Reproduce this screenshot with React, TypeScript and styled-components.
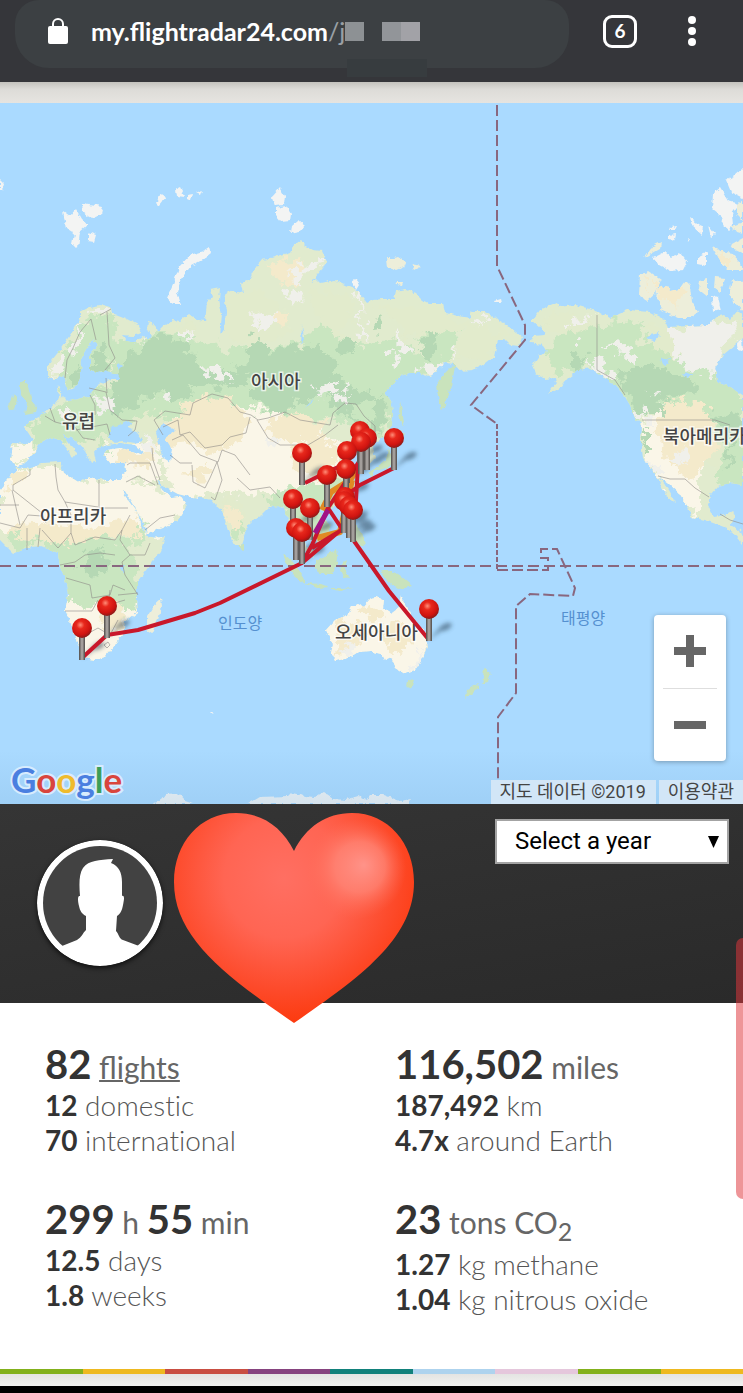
import React from "react";
import styled, { createGlobalStyle } from "styled-components";

const GlobalStyle = createGlobalStyle`
  * { box-sizing: border-box; }
  body { margin: 0; background: #fff; font-family: Lato, "Noto Sans CJK KR", sans-serif; }
`;

const Page = styled.div`
  position: relative;
  width: 100%;
  overflow: hidden;
`;

/* Browser bar */
const BrowserBar = styled.header`
  display: flex;
  align-items: flex-start;
  height: 82px;
  padding: 0 34px 0 15px;
  background: #35363a;
`;
const AddressBar = styled.div`
  position: relative;
  display: flex;
  align-items: flex-start;
  flex: 0 1 554px;
  height: 68px;
  padding: 0 32px;
  gap: 22px;
  background: #3c4043;
  border-radius: 24px 24px 34px 34px;
`;
const Address = styled.div`
  display: flex;
  align-items: center;
  height: 62px;
  color: #9aa0a6;
  font-size: 25px;
  line-height: 32px;
  white-space: nowrap;
`;
const Host = styled.strong`
  color: #fff;
  font-weight: 700;
`;
const Masked = styled.span<{ $tone: string; $gap?: number }>`
  width: 19px;
  height: 19px;
  margin-left: ${(p) => p.$gap ?? 0}px;
  background: ${(p) => p.$tone};
`;
const MaskedShade = styled.span`
  position: absolute;
  top: 59px;
  left: 332px;
  width: 80px;
  height: 18px;
  background: #373c3f;
`;
const BarActions = styled.div`
  display: flex;
  align-items: center;
  gap: 38px;
  height: 62px;
  margin-left: auto;
`;
const TabsButton = styled.button`
  width: 34px;
  height: 33px;
  padding: 0;
  border: 3px solid #fff;
  border-radius: 9px;
  background: none;
  color: #fff;
  font: 700 19px/24px Lato, sans-serif;
`;
const MenuButton = styled.button`
  display: flex;
  padding: 0;
  border: 0;
  background: none;
`;

/* Map */
const TopBand = styled.div`
  height: 21px;
  background: linear-gradient(#c4c3be, #dddcd8 35%, #e6e4e0);
`;
const MapArea = styled.section`
  position: relative;
  background: #aadaff;
`;
const MapDrawing = styled.svg`
  display: block;
  width: 100%;
  height: auto;
`;
const Region = styled.text`
  font-family: "Noto Sans CJK KR", sans-serif;
  font-size: 18px;
  font-weight: 500;
  fill: #444;
  stroke: #fff;
  stroke-opacity: 0.7;
  stroke-width: 3px;
  paint-order: stroke;
`;
const Ocean = styled.text`
  font-family: "Noto Sans CJK KR", sans-serif;
  font-size: 16px;
  fill: #5590d0;
`;
const ZoomControl = styled.div`
  position: absolute;
  right: 17px;
  bottom: 43px;
  display: flex;
  flex-direction: column;
  align-items: center;
  width: 72px;
  height: 146px;
  border-radius: 4px;
  background: #fff;
  box-shadow: 0 1px 5px rgba(0, 0, 0, 0.3);
`;
const ZoomButton = styled.button`
  display: flex;
  align-items: center;
  justify-content: center;
  flex: 1;
  width: 54px;
  padding: 0;
  border: 0;
  background: none;
  & + & { border-top: 1px solid #dedede; }
`;
const GoogleLink = styled.a`
  position: absolute;
  left: 11px;
  bottom: 3px;
  font: 700 35px/44px Lato, sans-serif;
  text-decoration: none;
  -webkit-text-stroke: 4px rgba(225, 241, 255, 0.85);
  paint-order: stroke fill;
`;
const Letter = styled.span<{ $color: string }>`
  color: ${(p) => p.$color};
`;
const Attribution = styled.div`
  position: absolute;
  right: 0;
  bottom: 0;
  display: flex;
  gap: 3px;
  color: #444;
  font: 18px/24px Roboto, "Noto Sans CJK KR", sans-serif;
`;
const Credit = styled.span`
  padding: 0 10px 0 8px;
  background: #d2e6f7;
`;
const Terms = styled.a`
  padding: 0 9px;
  background: #d2e6f7;
  color: inherit;
  text-decoration: none;
`;

/* Profile */
const Profile = styled.section`
  display: flex;
  align-items: flex-start;
  height: 199px;
  padding: 9px 14px 0 37px;
  background: linear-gradient(170deg, #353535, #2a2a2a);
`;
const Avatar = styled.svg`
  flex: none;
  margin: 27px 11px 0 0;
  border-radius: 50%;
  box-shadow: 0 2px 5px rgba(0, 0, 0, 0.7);
`;
const Heart = styled.svg`
  position: relative;
  flex: none;
`;
const YearPicker = styled.label`
  position: relative;
  margin: 6px 0 0 auto;
`;
const YearSelect = styled.select`
  appearance: none;
  width: 234px;
  height: 45px;
  padding: 0 36px 2px 18px;
  border: 2px solid #a3a3a3;
  border-radius: 0;
  background: #fff;
  color: #000;
  font: 24px Roboto, sans-serif;
`;
const Arrow = styled.svg`
  position: absolute;
  top: 17px;
  right: 10px;
  pointer-events: none;
`;

/* Totals */
const Totals = styled.main`
  display: grid;
  grid-template-columns: 350px 1fr;
  row-gap: 37px;
  padding: 37px 20px 52px 45px;
  background: #fff;
`;
const Headline = styled.h2`
  margin: 0;
  color: #333;
  font-size: 40px;
  font-weight: 700;
  line-height: 48px;
`;
const Unit = styled.span`
  color: #666;
  font-size: 30px;
  font-weight: 400;
  line-height: 30px;
  sub { line-height: 32px; }
`;
const UnitLink = styled.a`
  text-decoration-thickness: 2px;
  color: inherit;
`;
const Detail = styled.p`
  margin: 0;
  color: #555;
  font-size: 28px;
  font-weight: 300;
  font-variant-ligatures: none;
  line-height: 35px;
`;
const Value = styled.strong`
  color: #333;
  font-weight: 700;
`;

const Stripes = styled.div`
  display: flex;
  height: 5px;
`;
const Stripe = styled.span<{ $color: string }>`
  flex: 1;
  background: ${(p) => p.$color};
`;
const Footer = styled.div`
  height: 12px;
  background: linear-gradient(#e4e4e2, #f2f2f1);
`;
const SystemBar = styled.div`
  height: 7px;
  background: #000;
`;
const EdgePanel = styled.div`
  position: absolute;
  top: 938px;
  right: 0;
  width: 7px;
  height: 261px;
  border-radius: 8px 0 0 8px;
  background: rgba(223, 54, 60, 0.53);
`;

const EURASIA_AFRICA =
  "M80 312 90 307 100 305 111 308 112 313 125 318 138 325 141 333 134 336 122 335 127 341 134 343 143 336 148 339 152 336 147 328 148 322 152 323 156 328 157 333 165 325 172 320 180 321 190 314 198 320 205 321 207 302 212 297 210 290 220 288 219 300 222 315 220 335 224 330 226 312 225 300 228 290 235 292 243 293 241 283 250 280 256 267 262 260 275 257 290 252 294 244 300 240 305 245 313 250 322 251 327 262 318 273 310 284 316 279 320 283 335 280 345 285 357 290 367 303 373 300 383 299 394 299 396 291 405 289 415 293 422 300 430 304 443 304 445 313 458 316 470 318 472 311 485 311 495 317 500 322 510 327 522 337 519 346 510 345 504 339 498 340 496 347 494 357 485 364 472 370 460 371 455 364 445 363 435 372 428 377 420 373 410 373 400 376 392 385 385 393 391 401 393 412 392 425 386 435 378 441 372 447 375 458 370 464 362 456 358 450 350 455 345 456 350 463 347 468 352 475 356 485 350 497 340 505 325 509 318 508 322 518 330 525 328 535 318 543 312 535 306 529 303 535 306 545 314 552 314 558 303 548 298 535 296 522 290 524 284 508 278 506 270 507 262 515 252 520 246 530 241 545 235 545 228 530 222 510 216 505 212 500 203 498 190 497 178 494 165 487 157 480 162 490 172 497 180 496 187 506 178 520 163 528 147 533 143 522 135 508 124 490 121 490 130 503 137 512 143 528 149 537 165 536 160 552 150 565 137 582 137 600 138 612 125 622 122 635 115 645 105 657 95 660 83 658 78 645 70 620 65 610 68 595 65 578 60 567 58 553 50 550 40 546 25 548 13 553 0 540 0 490 12 475 18 467 28 469 42 463 60 462 64 473 80 483 88 477 105 480 120 480 126 470 125 462 110 464 103 455 107 450 120 448 135 452 145 454 135 445 120 443 108 445 98 448 94 453 96 462 91 463 85 450 72 438 62 434 68 442 78 452 72 459 68 450 60 440 50 437 40 443 35 452 25 463 17 466 10 460 12 443 30 444 33 440 25 428 27 423 38 418 50 408 57 402 60 395 56 390 58 385 61 392 63 398 70 401 90 396 97 385 105 382 115 377 97 373 90 370 90 355 98 345 92 340 85 351 82 360 80 378 75 388 68 390 64 375 55 380 48 378 48 365 60 350 70 335 80 318Z";
const NORTH_AMERICA =
  "M532 320 540 310 557 302 560 307 575 305 600 312 610 318 628 310 650 312 665 320 668 327 690 326 708 325 718 316 724 315 730 320 738 310 743 318V338L735 345 723 355 716 366 718 382 730 387 743 396V485L730 483 718 486 710 495 708 505 714 517 725 515 733 510 735 517 730 525 740 530 743 537V545L733 533 724 527 705 520 692 517 688 508 678 492 668 483 658 476 669 490 676 503 668 498 661 485 657 477 650 467 643 458 641 440 642 425 635 418 630 405 624 395 615 385 605 378 590 368 578 370 568 378 560 388 547 394 556 383 555 378 545 379 536 374 533 365 540 355 548 352 543 345 530 343 533 336 545 335 541 328Z";
const ARCTIC_ISLANDS =
  "M63 211 70 216 76 209 82 220 88 225 80 232 78 249 72 243 74 233 66 228ZM82 203 103 206 101 215 92 219 83 212ZM88 232 96 235 94 242 88 241Z" +
  "M156 203 160 195 166 197 159 206ZM176 189 180 187 185 197 177 196ZM187 195 193 194 191 201 187 199ZM196 193 202 190 200 195ZM0 180 4 184 2 191 0 191Z" +
  "M167 298 173 285 179 267 190 255 203 251 209 247 211 253 202 260 191 266 181 279 177 292 181 304 174 304Z" +
  "M272 197 280 188 285 196 284 205 275 206ZM276 208 286 206 291 214 290 221 281 222 276 216ZM291 226 298 220 305 226 300 232 290 234ZM351 282 355 279 359 284 356 289Z" +
  "M494 301 501 299 502 303 495 303Z" +
  "M690 218 703 227 702 235 692 226ZM708 225 715 234 711 237ZM697 257 707 252 707 266 697 264ZM687 237 690 239 688 242ZM670 227 677 226 675 230 669 230ZM669 235 676 234 674 242 669 239Z" +
  "M653 258 665 252 672 258 680 253 687 262 683 270 670 271 659 265ZM712 296 718 298 721 310 713 312Z" +
  "M713 193 720 188 728 201 739 204 732 214 733 225 729 231 722 225 723 218 712 209ZM726 180 734 176 743 168V198L731 192ZM737 344 742 339 743 352 738 350Z" +
  "M152 804 162 800 167 794 178 793 185 801 194 804ZM248 804 260 797 288 796 291 793 305 796 315 797 324 792 334 799 346 800 358 796 366 800 370 795 384 795 400 801 411 799 408 804ZM70 712 73 711ZM211 711 214 711 213 713Z";
const PALE_ISLANDS =
  "M387 258 394 258 399 257 406 262 404 267 397 270 388 267ZM411 264 421 266 414 270ZM395 282 403 282 402 285 396 284Z" +
  "M653 246 661 242 660 249 644 258ZM640 274 649 272 661 280 655 294 647 301 639 296ZM657 289 666 285 671 291 680 289 686 281 690 285 692 302 698 312 690 318 678 318 660 310 661 303 656 300Z" +
  "M712 247 721 251 732 253 740 262 743 270 727 270 720 260ZM699 281 708 279 708 297 698 289ZM715 277 726 278 720 292 714 287ZM732 280 743 282V312L734 302 729 294Z" +
  "M737 204 743 202V221L737 215ZM732 226 743 222V234L736 232ZM730 245 743 238V253L732 248Z" +
  "M326 630 335 620 348 615 352 607 358 604 363 607 371 598 377 597 384 600 383 608 391 613 399 607 401 596 407 608 414 620 426 633 428 647 421 661 415 670 404 673 396 668 391 657 385 660 382 654 370 651 358 652 349 658 335 661 331 653 333 645ZM147 616 153 606 161 599 162 606 158 620 152 633 147 630Z";
const GREEN_ISLANDS =
  "M20 383 25 380 28 388 33 402 37 408 36 413 25 415 27 403 21 394ZM8 407 14 394 18 400 15 409 9 411Z" +
  "M438 396 436 385 443 375 450 368 456 362 453 377 448 398 442 411Z" +
  "M400 401 404 421 402 427 399 415ZM397 430 406 433 399 440 395 435ZM388 447 394 458 391 466 383 469 373 472 373 477 368 472 378 466 386 461Z" +
  "M352 493 356 496 353 504ZM318 511 322 512 320 516ZM349 508 355 510 354 522 362 533 365 545 357 544 353 535 349 520ZM283 553 294 563 302 576 307 585 296 578 286 563ZM306 583 321 584 329 587 317 588ZM316 561 327 554 336 550 338 560 333 574 320 574 316 567Z" +
  "M342 563 347 560 345 571 349 578 343 577 340 570ZM381 571 392 571 402 577 413 586 405 588 398 589 388 582ZM328 588 343 588 353 587 340 591ZM408 680 414 681 411 689 407 686Z" +
  "M484 668 491 674 489 680 482 684 483 677ZM477 683 480 686 472 694 465 699 468 690ZM238 545 244 544 244 550Z";

const INLAND_WATER =
  "M108 437 112 427 122 424 128 421 131 424 128 427 136 431 143 441 134 443 122 441 114 442ZM156 433 163 423 175 430 165 438 172 449 170 462 162 457 160 446ZM97 373 104 371 118 375 120 379 104 379ZM650 335 660 333 655 341 647 338ZM660 359 670 358 665 367ZM683 374 695 373 686 378ZM302 325 301 345 304 339ZM314 397 304 408 309 405ZM119 566 124 565 123 573ZM118 363 122 366 118 370Z";

const PALE_LAND = [
  "M0 468H65L95 480H125L190 498 160 540 110 530 0 530Z",
  "M160 430 180 410 240 395 300 420 345 445 330 480 300 490 170 500Z",
  "M60 600H140V665H60ZM326 590H430V675H326Z",
  "M640 425 670 395 700 405 715 440 700 480 700 520 650 470Z",
  "M10 445H35L30 465H10ZM105 445H160V480H105Z",
];
const SAND = [
  "M158 440 165 424 200 398 225 397 250 417 240 440 215 455 185 443 160 447Z",
  "M265 425 290 410 330 424 315 440 270 440ZM292 450 315 438 340 445 330 475 300 475Z",
  "M0 531 20 522 90 528 140 518 137 535 60 543ZM15 470 31 474 5 490ZM120 450 155 450 150 465 115 466ZM185 470 215 470 200 485Z",
  "M336 625 350 620 370 635 355 650 338 655ZM360 607 375 605 388 620 370 618ZM380 628 400 620 412 640 395 655Z",
  "M665 400 700 402 713 415 715 450 690 480 665 455 655 430ZM267 264 305 258 302 285 280 280ZM105 607 125 605 118 635 100 628Z",
  "M655 285 682 285 675 310ZM645 275 652 276 647 292ZM168 287 178 280 176 302ZM718 250 736 260 722 265ZM273 315 285 310 287 320 277 327ZM225 505 238 510 240 530 230 525Z",
];
const LIGHT_GREEN = [
  "M75 335 85 322 112 316 120 345 105 380 60 395Z",
  "M60 350 85 330 82 380 60 380ZM30 425 55 405 105 385 140 400 130 427 95 440 35 445Z",
  "M110 345 150 335 175 325 225 350 300 345 330 315 345 345 405 340 435 370 390 400 385 450 340 420 250 410 220 400 160 420 120 410Z",
  "M418 335 450 315 460 345 425 370ZM350 470 340 505 285 515 265 500 290 485 330 480Z",
  "M40 548 55 530 130 542 140 580 138 610 115 612 65 600ZM0 530 40 540 20 555ZM120 530 150 520 140 545Z",
  "M545 345 580 325 645 322 640 345 690 360 743 385 743 420 700 418 650 400 640 420 620 400 590 365 550 375Z",
  "M712 435 743 410 743 485 715 487 720 460ZM290 510 330 515 325 545 305 535ZM387 400 405 395 403 435 393 435ZM232 510 245 525 240 545 230 535ZM436 375 452 372 442 405Z",
  "M30 410 37 412 25 415ZM10 397 17 404 8 410ZM96 445 106 440 112 455 98 455Z",
];
const DARK_GREEN = [
  "M107 405 115 375 135 352 165 335 190 342 192 362 210 378 187 390 183 408 170 390 148 395 130 410 116 415Z",
  "M255 335 268 350 320 345 340 370 325 378 290 380 260 375 225 390 200 382 215 372 245 365Z",
  "M255 375 335 365 350 390 385 393 350 410 385 440 340 415 325 398 300 400 280 415 255 405Z",
  "M90 352 108 345 107 375 90 370ZM67 374 80 365 80 385 68 388ZM375 400 388 405 382 435 368 425Z",
  "M620 375 645 365 680 375 700 390 680 398 660 400 665 418 640 410 625 395ZM570 357 588 353 583 365 570 370Z",
  "M85 555 107 550 105 575 80 570ZM710 412 743 418 743 432 720 430ZM641 435 648 425 648 460ZM725 450 735 440 730 470ZM376 320 386 322 382 330 374 331ZM420 345 436 330 438 350 425 360ZM345 335 357 340 350 355 340 345Z",
];
const SNOW = [
  "M72 342 86 322 83 340 74 355ZM50 368 62 358 66 365 55 378ZM85 312 103 306 111 309 95 316Z",
  "M200 365 220 368 235 380 215 382ZM165 390 175 393 168 403 155 397ZM355 288 362 302 363 325 368 342 360 335 359 310Z",
  "M390 333 405 340 410 350 395 345ZM285 275 318 260 323 265 300 280ZM250 315 268 320 280 310 275 325 258 327ZM285 290 305 298 290 308ZM313 390 338 380 333 394 318 400Z",
  "M600 346 625 342 639 364 630 365 620 352ZM585 362 600 360 620 380 610 380ZM668 328 715 320 737 326 720 357 712 378 690 370 680 362 672 345ZM570 322 592 315 585 325 570 325Z",
  "M470 320 490 318 485 328ZM455 345 460 348 450 360ZM418 368 445 360 428 378ZM340 395 350 380 353 390ZM387 349 400 354 395 368ZM330 397 350 395 345 405Z",
  "M670 458 687 445 690 455 682 468ZM645 458 655 465 660 475 651 470ZM142 440 160 448 160 455 145 450ZM262 435 280 440 270 445ZM140 335 152 336 145 345ZM178 332 195 328 190 340ZM95 400 112 398 118 405 108 413 96 408ZM55 408 68 408 75 418 60 422Z",
  "M635 408 645 410 655 422 640 416ZM648 390 658 393 653 397ZM577 336 583 338 582 344 577 343ZM415 655 425 648 420 665 408 673ZM342 645 355 643 357 652 345 653Z",
];
const GRASS = [
  "M225 300 250 290 280 305 295 330 250 345 225 335ZM310 290 345 292 355 320 335 340 315 315ZM375 305 440 305 465 330 410 335ZM460 320 510 335 490 355 460 360Z",
  "M535 325 560 310 600 325 565 335ZM645 322 670 330 675 355 650 350ZM140 415 160 410 165 425 145 435ZM222 490 240 500 245 525 225 515Z",
  "M125 330 140 333 118 340ZM160 328 190 318 195 330 170 335ZM535 363 552 358 556 380 540 375ZM710 420 725 445 715 475 705 450Z",
];

const BORDERS =
  "M91 319 80 332 73 348 67 360 65 378M91 319 96 340M107 312 109 345 115 358 105 370M100 315 111 309M106 378 107 393M89 388 106 392 110 410 122 420 137 421 135 430 128 436M45 416 55 422 50 408M55 422 75 427 83 438 95 440M76 430 107 424 110 435M90 395 95 405 95 415M154 420 165 411 190 415 193 403 212 394 228 398 240 412 251 415 258 420 268 418 285 412 300 420 330 425 333 413 345 403 356 404 364 416 375 426 375 440M257 420 268 438 280 445 308 445 325 435 338 425M154 420 163 435M163 427 178 420 180 435 190 432 205 448 222 445 230 437 246 433 250 417M172 440 183 435 200 455 218 462 222 450 235 455 250 475M152 448 153 460 160 480M192 465 193 482 205 488 210 478 217 462M192 463 180 463 170 455M217 462 222 480 215 500 211 497M237 478 250 490 270 487 280 498M127 465 130 463 150 463 158 485M126 482 138 476 155 485M145 530 160 518 175 515M30 469 30 475 13 485 13 490 42 513 46 523M12 490 20 525M19 505 0 505M55 464 56 477 58 490 65 502 98 507M99 480 99 508 128 508M65 502 71 515 71 533M0 523 20 528 28 515 42 516M27 528 27 550M40 528 38 547M71 533 58 548 42 530M71 533 75 545 95 537 115 540 122 530M130 515 122 530 120 540 130 555 145 555 150 543M130 555 122 562 125 575 138 595M60 565 75 562 85 555 100 553 115 555M66 578 90 585 92 598 110 595 113 585 125 590M65 611 92 611 98 600M110 590 108 605 125 600M138 593 118 595M85 635 98 628 110 635 118 620M597 315V370L615 380 625 395M642 420H715L730 425M658 476 670 479 685 479 695 488 709 497M104 645 108 642 110 645 107 648ZM720 514 730 520 743 524";

const PINS: Array<[number, number]> = [
  [82, 628], [107, 606], [302, 453], [394, 438], [360, 431], [367, 438], [361, 442],
  [347, 451], [346, 469], [327, 475], [293, 499], [310, 508], [345, 497], [344, 501],
  [349, 506], [353, 510], [296, 528], [302, 532], [429, 609],
];

function Pin({ x, y }: { x: number; y: number }) {
  return (
    <g>
      <rect x={x - 3} y={y + 8} width="6" height="24" fill="url(#stem)" />
      <circle cx={x} cy={y} r="10" fill="url(#ball)" />
    </g>
  );
}

function Patches({ shapes, fill }: { shapes: string[]; fill: string }) {
  return <path d={shapes.join("")} fill={fill} filter="url(#ragged)" />;
}

function WorldMap() {
  return (
    <MapDrawing viewBox="0 103 743 701" role="img" aria-label="Flight map">
      <defs>
        <clipPath id="land">
          <path d={EURASIA_AFRICA + NORTH_AMERICA + PALE_ISLANDS} />
        </clipPath>
        <radialGradient id="ball" cx="0.42" cy="0.35" r="0.65">
          <stop offset="0" stopColor="#ff8d78" />
          <stop offset="0.3" stopColor="#e8281c" />
          <stop offset="0.75" stopColor="#d01410" />
          <stop offset="1" stopColor="#8c1a18" />
        </radialGradient>
        <linearGradient id="stem">
          <stop offset="0" stopColor="#4e4a48" />
          <stop offset="0.5" stopColor="#b4afac" />
          <stop offset="1" stopColor="#4e4a48" />
        </linearGradient>
        <linearGradient id="seaShade" x2="0" y2="1">
          <stop offset="0" stopColor="#7fb2dc" stopOpacity="0" />
          <stop offset="1" stopColor="#7fb2dc" stopOpacity="0.25" />
        </linearGradient>
        <filter id="soft" x="-50%" y="-50%" width="200%" height="200%">
          <feGaussianBlur stdDeviation="2" />
        </filter>
        <filter id="ragged" filterUnits="userSpaceOnUse" x="0" y="103" width="743" height="701">
          <feTurbulence type="fractalNoise" baseFrequency="0.09" numOctaves="3" seed="4" />
          <feDisplacementMap in="SourceGraphic" scale="24" xChannelSelector="R" yChannelSelector="G" />
        </filter>
        <filter id="coast" filterUnits="userSpaceOnUse" x="0" y="103" width="743" height="701">
          <feTurbulence type="fractalNoise" baseFrequency="0.2" numOctaves="2" seed="9" />
          <feDisplacementMap in="SourceGraphic" scale="5" xChannelSelector="R" yChannelSelector="G" />
        </filter>
      </defs>
      <rect y="103" width="743" height="701" fill="#aadaff" />
      <g filter="url(#coast)">
        <path d={ARCTIC_ISLANDS} fill="#f3f4f3" />
        <path d={GREEN_ISLANDS} fill="#c9e3bc" />
        <path d={PALE_ISLANDS} fill="#edeeda" />
        <path d={EURASIA_AFRICA + NORTH_AMERICA} fill="#e1ebce" />
        <g clipPath="url(#land)">
          <Patches shapes={PALE_LAND} fill="#faf6e8" />
          <Patches shapes={LIGHT_GREEN} fill="#c9e6c0" />
          <Patches shapes={GRASS} fill="#e2ebcc" />
          <Patches shapes={DARK_GREEN} fill="#b5d8b4" />
          <Patches shapes={SAND} fill="#f4eacb" />
          <Patches shapes={SNOW} fill="#f0f0eb" />
        </g>
        <path d={INLAND_WATER} fill="#aadaff" />
      </g>
      <path d={BORDERS} fill="none" stroke="#8d8a86" strokeOpacity="0.75" strokeWidth="0.8" strokeLinejoin="round" />
      <rect y="750" width="743" height="54" fill="url(#seaShade)" />
      <g fill="none" stroke="#89677f" strokeWidth="2">
        <path d="M0 566H743" strokeDasharray="11 5" />
        <path d="M497 105V266L525 325V340L471 405 497 424" strokeDasharray="11 4" />
        <path d="M497 424V570" strokeDasharray="5 2" />
        <path d="M497 570H548V558H541V549H557L575 588 573 596 530 594 516 606V693L498 717V780" strokeDasharray="11 4" />
      </g>
      <Region x="62" y="428">유럽</Region>
      <Region x="251" y="388">아시아</Region>
      <Region x="40" y="523">아프리카</Region>
      <Region x="663" y="443">북아메리카</Region>
      <Region x="335" y="639">오세아니아</Region>
      <Ocean x="218" y="629">인도양</Ocean>
      <Ocean x="561" y="624">태평양</Ocean>
      <g fill="#24384a" opacity="0.5" filter="url(#soft)">
        {PINS.map(([x, y]) => (
          <path key={`${x}-${y}`} d={`M${x} ${y + 31}L${x + 12} ${y + 17}Q${x + 21} ${y + 11} ${x + 23} ${y + 16}Q${x + 20} ${y + 22} ${x + 12} ${y + 22}Z`} />
        ))}
      </g>
      <g fill="none" strokeWidth="4" strokeLinejoin="round" stroke="#c9182b">
        <path d="M358 468 350 480 331 492 322 510M317 538 340 532 352 480" stroke="#e08a24" strokeWidth="6" />
        <path d="M82 658 107 635 138 630 195 613 220 603 302 563" />
        <path d="M302 563 342 529 328 508 312 545 302 563 294 525M312 548 345 528M328 508 350 475 360 460M354 541 389 591 429 640M305 483 327 472 347 463M394 468 360 485 340 500M358 465 356 500 352 530" />
        <path d="M328 510 315 533" stroke="#a11386" strokeWidth="5" />
      </g>
      {PINS.map(([x, y]) => (
        <Pin key={`${x}-${y}`} x={x} y={y} />
      ))}
    </MapDrawing>
  );
}

const GOOGLE: Array<[string, string]> = [
  ["G", "#4a7fe0"], ["o", "#d9453d"], ["o", "#efbb2c"], ["g", "#4a7fe0"], ["l", "#3c9e58"], ["e", "#d9453d"],
];
const STRIPE_COLORS = ["#83b11b", "#eeb920", "#c94e42", "#86437f", "#12817b", "#aed3ee", "#e5c7dc", "#83b11b", "#eeb920"];

export default function App() {
  return (
    <Page>
      <GlobalStyle />
      <BrowserBar>
        <AddressBar>
          <svg width="22" height="62" viewBox="0 0 22 62" aria-hidden="true">
            <rect x="1" y="26" width="20" height="18" rx="2" fill="#fff" />
            <path d="M6 27v-3a5 5 0 0 1 10 0v3" fill="none" stroke="#fff" strokeWidth="2" />
          </svg>
          <Address>
            <Host>my.flightradar24.com</Host>/j
            <Masked $tone="#8d9194" />
            <Masked $tone="#929599" $gap={18} />
            <Masked $tone="#a2a2a7" />
          </Address>
          <MaskedShade />
        </AddressBar>
        <BarActions>
          <TabsButton aria-label="Open tabs">6</TabsButton>
          <MenuButton aria-label="Menu">
            <svg width="34" height="30" viewBox="0 0 34 30" fill="#fff">
              <circle cx="17" cy="4" r="4" />
              <circle cx="17" cy="15" r="4" />
              <circle cx="17" cy="26" r="4" />
            </svg>
          </MenuButton>
        </BarActions>
      </BrowserBar>
      <TopBand />
      <MapArea>
        <WorldMap />
        <ZoomControl>
          <ZoomButton aria-label="Zoom in">
            <svg width="34" height="34" viewBox="0 0 34 34" fill="#666">
              <path d="M1 13h12V1h8v12h12v8H21v12h-8V21H1z" />
            </svg>
          </ZoomButton>
          <ZoomButton aria-label="Zoom out">
            <svg width="34" height="34" viewBox="0 0 34 34" fill="#666">
              <path d="M1 13h32v8H1z" />
            </svg>
          </ZoomButton>
        </ZoomControl>
        <GoogleLink href="#">
          {GOOGLE.map(([letter, color], i) => (
            <Letter key={i} $color={color}>{letter}</Letter>
          ))}
        </GoogleLink>
        <Attribution>
          <Credit>지도 데이터 ©2019</Credit>
          <Terms href="#">이용약관</Terms>
        </Attribution>
      </MapArea>
      <Profile>
        <Avatar width="126" height="126" viewBox="37 840 126 126" aria-hidden="true">
          <defs>
            <clipPath id="portrait"><circle cx="100" cy="903" r="60" /></clipPath>
          </defs>
          <circle cx="100" cy="903" r="63" fill="#fff" />
          <circle cx="100" cy="903" r="57" fill="#424242" />
          <path
            clipPath="url(#portrait)"
            fill="#fff"
            d="M80 896C79 884 79 874 83 868C89 860 99 860 113 859L111 863C119 866 122 873 122 882L122 896C125 895 124 900 123 905C122 911 120 914 117 916L116 931C119 934 119 939 123 940L139 946 150 970H50L62 946 77 940C82 937 82 934 86 930L86 916C82 914 80 911 79 906C78 902 77 895 80 896Z"
          />
        </Avatar>
        <Heart width="240" height="210" viewBox="0 0 240 210" role="img" aria-label="Heart">
          <defs>
            <radialGradient id="heartFill" gradientUnits="userSpaceOnUse" cx="110" cy="65" r="150">
              <stop offset="0" stopColor="#ff6f62" />
              <stop offset="0.4" stopColor="#ff6553" />
              <stop offset="0.75" stopColor="#fd4a2a" />
              <stop offset="1" stopColor="#fc380b" />
            </radialGradient>
            <radialGradient id="shine" gradientUnits="userSpaceOnUse" cx="182" cy="56" r="50" fx="190" fy="52">
              <stop offset="0" stopColor="#ff9389" />
              <stop offset="0.5" stopColor="#ff8778" stopOpacity="0.75" />
              <stop offset="1" stopColor="#ff6a55" stopOpacity="0" />
            </radialGradient>
          </defs>
          <path d="M120 38C108 14 88 0 62 0C26 0 0 30 0 69C0 124 50 162 120 210C190 162 240 124 240 69C240 30 214 0 178 0C152 0 132 14 120 38Z" fill="url(#heartFill)" />
          <circle cx="182" cy="56" r="50" fill="url(#shine)" />
        </Heart>
        <YearPicker>
          <YearSelect aria-label="Year" defaultValue="">
            <option value="">Select a year</option>
          </YearSelect>
          <Arrow width="11" height="12" viewBox="0 0 11 12" aria-hidden="true">
            <path d="M0 0h11L5.500 12z" />
          </Arrow>
        </YearPicker>
      </Profile>
      <Totals>
        <section>
          <Headline>82<Unit> <UnitLink href="#">flights</UnitLink></Unit></Headline>
          <Detail><Value>12</Value> domestic</Detail>
          <Detail><Value>70</Value> international</Detail>
        </section>
        <section>
          <Headline>116,502<Unit> miles</Unit></Headline>
          <Detail><Value>187,492</Value> km</Detail>
          <Detail><Value>4.7x</Value> around Earth</Detail>
        </section>
        <section>
          <Headline>299<Unit> h </Unit>55<Unit> min</Unit></Headline>
          <Detail><Value>12.5</Value> days</Detail>
          <Detail><Value>1.8</Value> weeks</Detail>
        </section>
        <section>
          <Headline>23<Unit> tons CO<sub>2</sub></Unit></Headline>
          <Detail><Value>1.27</Value> kg methane</Detail>
          <Detail><Value>1.04</Value> kg nitrous oxide</Detail>
        </section>
      </Totals>
      <Stripes>
        {STRIPE_COLORS.map((color, i) => (
          <Stripe key={i} $color={color} />
        ))}
      </Stripes>
      <Footer />
      <SystemBar />
      <EdgePanel />
    </Page>
  );
}
